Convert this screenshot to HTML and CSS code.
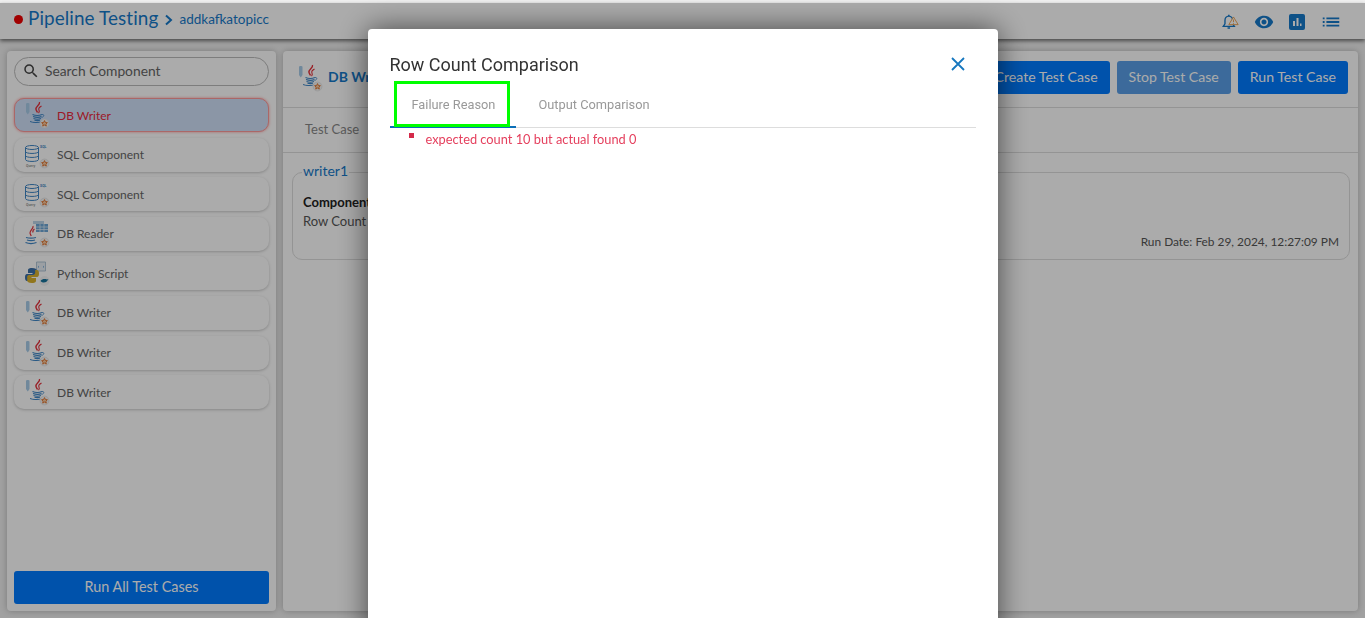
FILE: index.html
```html
<!DOCTYPE html>
<html lang="en">
  <head>
    <meta charset="UTF-8" />
    <title>Pipeline Testing</title>
    <link rel="stylesheet" href="styles.css">
  </head>

  <body>
    <svg class="defs" width="0" height="0">
      <symbol id="badge" viewBox="0 0 26 28">
        <circle cx="20.500" cy="22.500" r="4.500" fill="#f4f4f4" stroke="#ddd" stroke-width="0.600"/>
        <path d="M20.500 19.600l.9 1.900 2 .2-1.500 1.400.4 2-1.800-1-1.800 1 .4-2-1.500-1.400 2-.2z" fill="#f6c9a0" stroke="#e0702a" stroke-width="0.900"/>
      </symbol>
      <symbol id="java" viewBox="0 0 26 28">
        <path d="M15.500 1c1 3-4.500 4.500-3.500 7.500.3 1 1 1.800 1.500 3" fill="none" stroke="#e4323c" stroke-width="1.400"/>
        <path d="M17.500 5c-2 1.200-3.500 2.500-2.500 4 .5 1 .5 2 -.5 3" fill="none" stroke="#e4323c" stroke-width="1.100"/>
        <path d="M8.500 13.500c2.500 1 7 1 9.500 0M9 15.500c2.500 .9 6.500 .9 8.500 0M9.500 17.500c2 .8 5.500 .8 7.500 0M10.500 19.300c2 .5 3.500 .5 5.500 0" fill="none" stroke="#3f86c6" stroke-width="1.100"/>
        <path d="M18 13.500c2.500-.5 2.500 2.300 -.5 3" fill="none" stroke="#3f86c6" stroke-width="0.800"/>
        <path d="M6 20.500c3 1.400 9 1.400 12 0" fill="none" stroke="#3f86c6" stroke-width="1"/>
      </symbol>
      <symbol id="writer" viewBox="0 0 26 28">
        <path d="M2 3c0-1.200 3.500-1.200 3.500 0v8l-1.750 2.500L2 11z" fill="#a8cbe8"/>
        <use href="#java"/>
        <use href="#badge"/>
      </symbol>
      <symbol id="db" viewBox="0 0 26 28">
        <g fill="none" stroke="#3f86c6" stroke-width="1">
          <ellipse cx="8" cy="6.500" rx="6.500" ry="2"/>
          <path d="M1.500 6.500v12c0 2.600 13 2.600 13 0v-12M1.500 10.500c0 2.600 13 2.600 13 0M1.500 14.500c0 2.600 13 2.600 13 0"/>
        </g>
        <use href="#badge"/>
      </symbol>
      <symbol id="reader" viewBox="0 0 26 28">
        <path d="M9 1h11v3H9z" fill="#bcd4e8"/>
        <path d="M12 4h12v8H12z" fill="#6ea6d6"/>
        <path d="M12 7h12M12 9.500h12M16 4v8M20 4v8" stroke="#e8f0f8" stroke-width="0.700"/>
        <path d="M9 6c1 2.500-3.500 4.500-3 7 .2 1 .8 2 1.200 3M10.500 9c-1.500 1-2 2-1.500 3.500" fill="none" stroke="#e4323c" stroke-width="1.200"/>
        <path d="M2 17.500c3 .8 7 .8 10 0M3 20c2 .7 6 .7 8 0M1.500 22.500c3 1.200 8 1.200 11 0" fill="none" stroke="#3f86c6" stroke-width="1.200"/>
        <use href="#badge"/>
      </symbol>
      <symbol id="python" viewBox="0 0 26 28">
        <path d="M12.500 3h9v9h-9z" fill="#e8eef4" stroke="#9fb8cc" stroke-width="0.800"/>
        <path d="M15 7l-1 .8 1 .8M19 7l1 .8-1 .8" fill="none" stroke="#6ea6d6" stroke-width="0.800"/>
        <path d="M8 9c-3.500 0-4 1.200-4 2.500V14h4.500v1H3c-1.500 0-2 1.500-2 3.500S1.600 22 3 22h1.800v-2.500c0-1.500 1-2.500 2.500-2.500H11c1 0 1.800-.8 1.800-2v-3.500C12.800 10 11.500 9 8 9z" fill="#3b6fa8"/>
        <path transform="rotate(180 8 16.500)" d="M8 9c-3.500 0-4 1.200-4 2.500V14h4.500v1H3c-1.500 0-2 1.500-2 3.500S1.600 22 3 22h1.800v-2.500c0-1.500 1-2.500 2.500-2.500H11c1 0 1.800-.8 1.800-2v-3.500C12.800 10 11.500 9 8 9z" fill="#d9b02c"/>
        <circle cx="20.500" cy="22" r="5" fill="#f4f4f4"/>
        <path d="M16.500 22c1.500-2 4-2.500 6.500-1.500l1.500-.5-1 1.500c-1 2-4.500 3-7 .5z" fill="#17749c"/>
      </symbol>
    </svg>

    <div class="strip"></div>
    <header class="topbar">
      <span class="status"></span>
      <h1 class="appTitle">Pipeline Testing</h1>
      <svg class="chev" width="10" height="12" viewBox="0 0 10 12"><path d="M2 1.500L7 6l-5 4.500" fill="none" stroke="currentColor" stroke-width="2"/></svg>
      <span class="crumb">addkafkatopicc</span>
      <nav class="topIcons">
        <svg width="17" height="17" viewBox="0 0 20 20">
          <path d="M8 2.500c-3 0-4.500 2.300-4.500 5v4L1.500 14.500h13L12.500 11.500v-4c0-2.700-1.500-5-4.500-5z" fill="none" stroke="currentColor" stroke-width="1.600"/>
          <path d="M6.500 16.500h3M8 1v1.500" stroke="currentColor" stroke-width="1.800"/>
          <path d="M13.500 3.500l5.500 9h-11z" fill="#fff" stroke="#e8963c" stroke-width="1"/>
          <path d="M13.500 6.500v3M13.500 10.500v1" stroke="#e8963c" stroke-width="1"/>
        </svg>
        <svg width="20" height="20" viewBox="0 0 24 24"><path fill="currentColor" d="M12 4.500C7 4.500 2.730 7.610 1 12c1.730 4.390 6 7.500 11 7.500s9.270-3.110 11-7.500c-1.730-4.390-6-7.500-11-7.500zM12 17c-2.760 0-5-2.240-5-5s2.240-5 5-5 5 2.240 5 5-2.240 5-5 5zm0-8c-1.660 0-3 1.340-3 3s1.340 3 3 3 3-1.340 3-3-1.340-3-3-3z"/></svg>
        <svg width="16" height="16" viewBox="0 0 16 16"><rect width="16" height="16" rx="2" fill="currentColor"/><path d="M4 7h2v5H4zM7.500 4h2v8h-2zM11 9.500h1.500V12H11z" fill="#fff"/></svg>
        <svg width="22" height="22" viewBox="0 0 24 24"><path fill="currentColor" d="M3 13h2v-2H3v2zm0 4h2v-2H3v2zm0-8h2V7H3v2zm4 4h14v-2H7v2zm0 4h14v-2H7v2zM7 7v2h14V7H7z"/></svg>
      </nav>
    </header>

    <div class="wrap">
      <aside class="sidebar">
        <div>
          <div class="search">
            <svg width="18" height="18" viewBox="0 0 24 24"><path fill="#444" d="M15.500 14h-.79l-.28-.27A6.470 6.470 0 0 0 16 9.500 6.500 6.500 0 1 0 9.500 16c1.610 0 3.090-.59 4.230-1.570l.27.28v.79l5 4.990L20.490 19l-4.990-5zm-6 0C7.010 14 5 11.990 5 9.500S7.010 5 9.500 5 14 7.010 14 9.500 11.990 14 9.500 14z"/></svg>
            <span>Search Component</span>
          </div>
          <ul class="compList">
            <li class="comp valgt"><svg class="ico"><use href="#writer"/></svg>DB Writer</li>
            <li class="comp"><svg class="ico" viewBox="0 0 26 28"><use href="#db"/><text x="16" y="7" class="tiny blue">SQL</text><text x="2" y="26" class="tiny grey">Query</text></svg>SQL Component</li>
            <li class="comp"><svg class="ico" viewBox="0 0 26 28"><use href="#db"/><text x="16" y="7" class="tiny blue">SQL</text><text x="2" y="26" class="tiny grey">Query</text></svg>SQL Component</li>
            <li class="comp"><svg class="ico"><use href="#reader"/></svg>DB Reader</li>
            <li class="comp"><svg class="ico"><use href="#python"/></svg>Python Script</li>
            <li class="comp"><svg class="ico"><use href="#writer"/></svg>DB Writer</li>
            <li class="comp"><svg class="ico"><use href="#writer"/></svg>DB Writer</li>
            <li class="comp"><svg class="ico"><use href="#writer"/></svg>DB Writer</li>
          </ul>
        </div>
        <button class="btn btnWide">Run All Test Cases</button>
      </aside>

      <main class="panel">
        <div class="panelHead">
          <svg class="ico"><use href="#writer"/></svg>
          <h2 class="compName">DB Writer</h2>
          <div class="actions">
            <button class="btn">Create Test Case</button>
            <button class="btn off">Stop Test Case</button>
            <button class="btn">Run Test Case</button>
          </div>
        </div>
        <div class="panelTabs"><span>Test Case</span></div>
        <section class="result">
          <span class="legend">writer1</span>
          <p class="resLabel">Component</p>
          <p class="resText">Row Count</p>
          <p class="runDate">Run Date: Feb 29, 2024, 12:27:09 PM</p>
        </section>
      </main>
    </div>

    <div class="overlay">
      <section class="modal">
        <div class="modalHead">
          <h3>Row Count Comparison</h3>
          <svg width="16" height="16" viewBox="0 0 16 16"><path d="M2 2l12 12M14 2L2 14" stroke="#1677bf" stroke-width="1.800" fill="none"/></svg>
        </div>
        <div class="tabs">
          <span class="tab active">Failure Reason</span>
          <span class="tab">Output Comparison</span>
          <div class="marker"></div>
        </div>
        <ul class="errors">
          <li>expected count 10 but actual found 0</li>
        </ul>
      </section>
    </div>
  </body>
</html>
```

FILE: styles.css
```css
* {
  box-sizing: border-box;
}

html,
body {
  height: 618px;
  margin: 0;
  overflow: hidden;
}

body {
  background-color: #f0f0f0;
  font-family: "Lato", "Noto Sans", sans-serif;
  color: #555;
}

.defs {
  position: absolute;
}

.tiny {
  font-family: "Roboto", sans-serif;
  font-size: 3.500px;
  font-weight: bold;
}

.blue {
  fill: #3f86c6;
}

.grey {
  fill: #999;
}

.strip {
  height: 3px;
}

.topbar {
  display: flex;
  align-items: center;
  height: 36px;
  padding: 0 23px 5px 14px;
  background-color: #fff;
  box-shadow: 0 2px 4px rgba(0, 0, 0, 0.55);
  color: #1679c9;
  position: relative;
}

.status {
  width: 9px;
  height: 9px;
  margin-top: 2px;
  border-radius: 50%;
  background-color: #f00000;
}

.appTitle {
  margin: 0 0 2px 5px;
  font-size: 18.900px;
  font-weight: 400;
  letter-spacing: 0.1px;
}

.chev {
  margin: 3px 5px 0 6px;
}

.crumb {
  font-size: 13.500px;
  margin-top: 1px;
}

.topIcons {
  display: flex;
  align-items: center;
  gap: 15px;
  margin-left: auto;
  margin-top: 7px;
}

.wrap {
  display: flex;
  gap: 7px;
  height: 560px;
  margin: 12px 7px 0;
}

.sidebar {
  display: flex;
  flex-direction: column;
  justify-content: space-between;
  width: 269px;
  padding: 6px 7px 7px;
  background-color: #fff;
  border-radius: 4px;
  box-shadow: 0 0 6px rgba(0, 0, 0, 0.25);
}

.search {
  display: flex;
  align-items: center;
  gap: 5px;
  height: 29px;
  padding: 0 0 3px 7px;
  border: 1px solid #bbb;
  border-radius: 15px;
  font-size: 13.800px;
  color: #666;
}

.search svg {
  margin-top: 2px;
}

.compList {
  list-style: none;
  margin: 12px 0 0;
  padding: 0;
  display: flex;
  flex-direction: column;
  gap: 5.600px;
}

.comp {
  display: flex;
  align-items: center;
  gap: 7px;
  height: 34px;
  padding-left: 10px;
  border-radius: 10px;
  font-size: 12px;
  color: #666;
  box-shadow: 0 1px 3px rgba(0, 0, 0, 0.22);
}

.comp.valgt {
  background-color: #d0e0f8;
  border: 1px solid #ff9a9a;
  box-shadow: 0 0 3px #ff9a9a;
  color: #e8283c;
  padding-left: 9px;
}

.ico {
  width: 26px;
  height: 28px;
  flex-shrink: 0;
}

.btn {
  height: 33px;
  padding: 0 12px 2px;
  border: 0;
  border-radius: 3px;
  background-color: #007bff;
  color: #fff;
  font-family: inherit;
  font-size: 14.100px;
}

.btn.off {
  background-color: #5a9fe8;
}

.btnWide {
  width: 100%;
  font-size: 14.400px;
}

.panel {
  flex: 1;
  background-color: #fff;
  border-radius: 4px;
  box-shadow: 0 0 6px rgba(0, 0, 0, 0.25);
}

.panelHead {
  display: flex;
  align-items: center;
  height: 57px;
  padding: 0 10px 3px 14px;
  border-bottom: 1px solid #ddd;
}

.compName {
  margin: 0 0 2px 5px;
  font-size: 14px;
  color: #1679c9;
}

.actions {
  display: flex;
  gap: 7px;
  margin-left: auto;
}

.panelTabs {
  height: 45px;
  padding: 13px 22px 0;
  border-bottom: 1px solid #ddd;
  font-size: 13px;
  color: #888;
}

.result {
  position: relative;
  height: 88px;
  margin: 19px 8px 0 9px;
  padding: 21px 10px 0;
  border: 1px solid #ddd;
  border-radius: 10px;
  font-size: 13px;
}

.legend {
  position: absolute;
  top: -11px;
  left: 9px;
  padding: 0 1px;
  background-color: #fff;
  font-size: 14px;
  color: #1679c9;
}

.result p {
  margin: 0;
}

.resLabel {
  font-weight: bold;
  color: #222;
  line-height: 17px;
}

.resText {
  line-height: 21px;
}

.runDate {
  text-align: right;
  font-size: 11.900px;
  line-height: 18px;
  margin-top: 1px !important;
}

.overlay {
  position: fixed;
  top: 3px;
  left: 0;
  width: 100%;
  height: 615px;
  display: flex;
  justify-content: center;
  padding-top: 26px;
  background-color: rgba(0, 0, 0, 0.33);
}

.modal {
  width: 630px;
  height: 700px;
  padding: 0 22px;
  background-color: #fff;
  border-radius: 4px;
  box-shadow: 0 0 30px rgba(0, 0, 0, 0.6);
}

.modalHead {
  display: flex;
  align-items: center;
  justify-content: space-between;
  height: 52px;
  padding: 18px 10px 0 0;
}

.modalHead h3 {
  margin: 0;
  font-family: "Roboto", sans-serif;
  font-size: 18px;
  font-weight: 400;
  color: #333;
}

.tabs {
  position: relative;
  display: flex;
  height: 47px;
  border-bottom: 1px solid #ddd;
  font-family: "Roboto", sans-serif;
  font-size: 12.800px;
  color: #999;
}

.tab {
  padding: 16px 0 0 23px;
  white-space: nowrap;
}

.tab.active {
  width: 126px;
  height: 47px;
  padding-left: 22px;
  border-bottom: 2px solid #0b6fb8;
}

.marker {
  position: absolute;
  top: 0;
  left: 4px;
  width: 116px;
  height: 46px;
  border: 3px solid #00ff00;
}

.errors {
  list-style: none;
  margin: 3px 0 0;
  padding: 0 0 0 36px;
  font-size: 12.800px;
  color: #e5405e;
}

.errors li {
  position: relative;
}

.errors li::before {
  content: "";
  position: absolute;
  left: -17px;
  top: 2px;
  width: 5px;
  height: 5px;
  background-color: #d42a4a;
}
```
